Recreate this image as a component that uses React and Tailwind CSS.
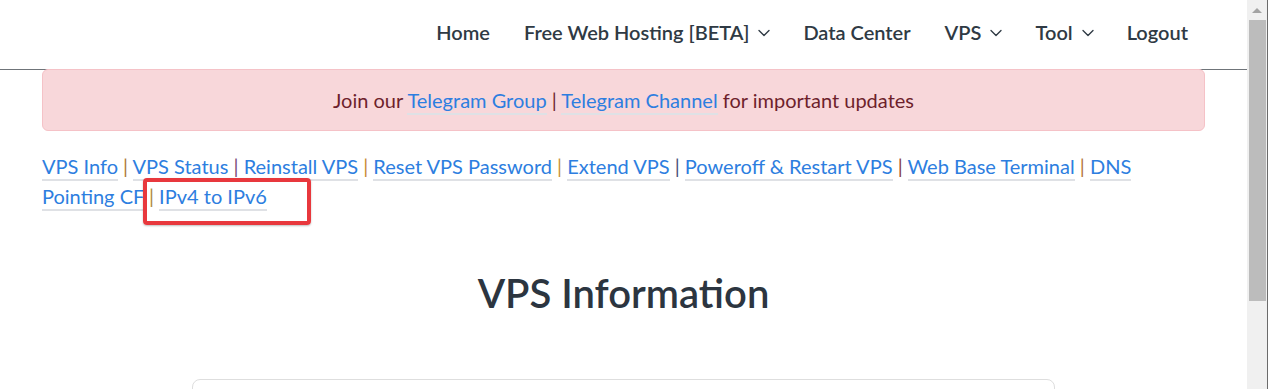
import React from 'react'
import { ChevronDown } from 'lucide-react'

const navItems = [
  { label: 'Home' },
  { label: 'Free Web Hosting [BETA]', drop: true },
  { label: 'Data Center' },
  { label: 'VPS', drop: true },
  { label: 'Tool', drop: true },
  { label: 'Logout' },
]

const links = [
  { label: 'VPS Info', sep: 'text-[#b07a3a]' },
  { label: 'VPS Status', sep: 'text-[#7a4a78]' },
  { label: 'Reinstall VPS', sep: 'text-[#c78a35]' },
  { label: 'Reset VPS Password', sep: 'text-[#c7923a]' },
  { label: 'Extend VPS', sep: 'text-[#4a4f7a]' },
  { label: 'Poweroff & Restart VPS', sep: 'text-[#8a4040]' },
  { label: 'Web Base Terminal', sep: 'text-[#b5743a]' },
  { label: 'DNS Pointing CF', sep: 'text-[#b08a40]' },
  { label: 'IPv4 to IPv6' },
]

function Link({ children }) {
  return (
    <a className="text-[#2d7ee0] border-b-2 border-[#dfe1e5] pb-[1px]">{children}</a>
  )
}

export default function App() {
  return (
    <div className="flex h-[389px] w-full overflow-hidden bg-white font-['Lato',sans-serif]">
      <div className="flex-1 min-w-0">
        {/* navbar */}
        <nav className="h-[70px] border-b border-[#6f7479] flex items-center justify-end pr-[59px] pb-[5px]">
          <ul className="flex items-center gap-[34px] text-[20px] font-semibold text-[#2f3a44]">
            {navItems.map((item) => (
              <li key={item.label} className="flex items-center">
                <span>{item.label}</span>
                {item.drop && (
                  <ChevronDown className="w-5 h-5 ml-[5px] -mr-[5px] mt-[2px] text-[#2f3a44]" strokeWidth={1.6} />
                )}
              </li>
            ))}
          </ul>
        </nav>

        <div className="mx-[42px]">
          <div className="h-[62px] -mt-px rounded-md border border-[#f5c2c7] bg-[#f8d7da] flex items-center justify-center text-[20px] text-[#6e1f2c]">
            <span>
              Join our <Link>Telegram Group</Link> | <Link>Telegram Channel</Link> for important updates
            </span>
          </div>

          <div className="relative mt-[20px] text-[20px] leading-[30px]">
            <p>
              {links.map((l) => (
                <React.Fragment key={l.label}>
                  <Link>{l.label}</Link>
                  {l.sep && <span className={l.sep}> | </span>}
                </React.Fragment>
              ))}
            </p>
            <div className="absolute left-[101px] top-[27px] w-[168px] h-[47px] border-[4px] border-[#e8383d] rounded-[4px] shadow-[0_1px_2px_rgba(0,0,0,0.25)]" />
          </div>

          <h1 className="mt-[56px] text-center text-[40px] leading-[53px] font-semibold text-[#2c3540]">
            VPS Information
          </h1>

          <div className="mt-[59px] mx-auto w-[863px] h-[60px] border border-[#dedede] rounded-lg" />
        </div>
      </div>

      {/* scrollbar */}
      <div className="w-[21px] h-full bg-[#f0f0f0] border-r border-[#6b6b6b] flex flex-col items-center">
        <div className="h-[20px] flex items-center justify-center">
          <div className="w-0 h-0 border-l-[5px] border-r-[5px] border-b-[5px] border-l-transparent border-r-transparent border-b-[#a3a3a3]" />
        </div>
        <div className="w-[17px] h-[281px] bg-[#bcbcbc]" />
      </div>
    </div>
  )
}
